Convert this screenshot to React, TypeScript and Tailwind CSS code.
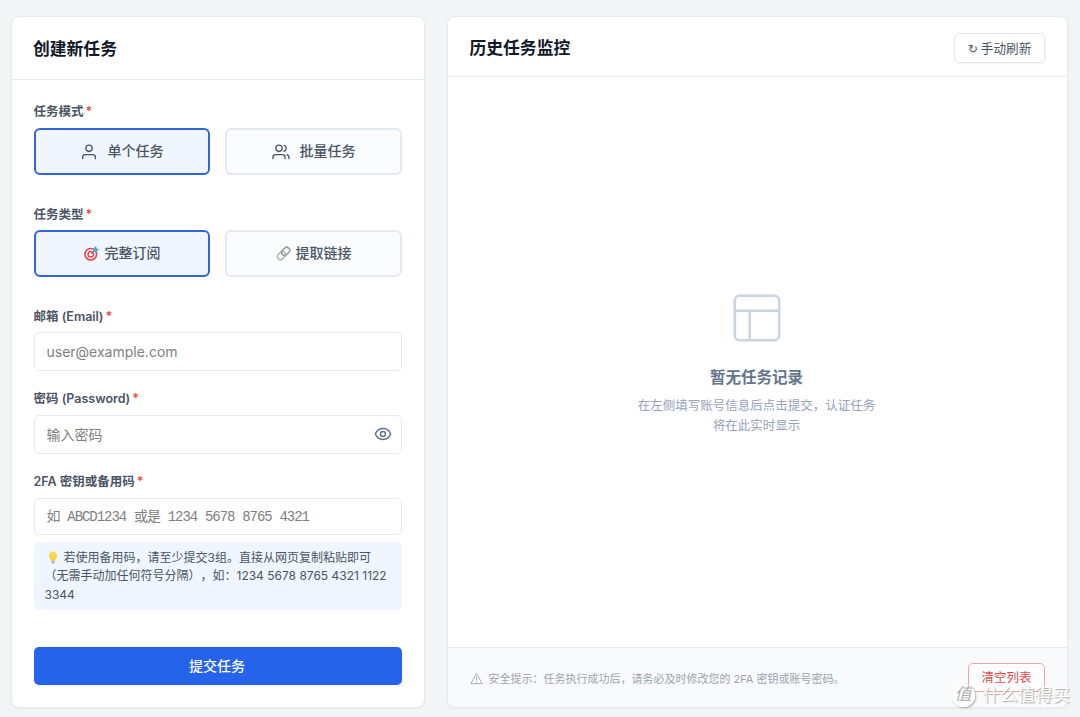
import { useState, type ReactNode } from "react";

const inputClass =
  "block w-full rounded-[5px] border border-[#e8eaed] bg-white px-[11.500px] text-[14px] text-slate-700 placeholder:text-[#808080] focus:outline-none";

function UserIcon() {
  return (
    <svg width="16" height="16" viewBox="0 0 24 24" fill="none" stroke="currentColor" strokeWidth="2" strokeLinecap="round" strokeLinejoin="round">
      <path d="M21.500 22v-2a4 4 0 0 0-4-4h-11a4 4 0 0 0-4 4v2" />
      <circle cx="12" cy="6.500" r="4.700" />
    </svg>
  );
}

function UsersIcon() {
  return (
    <svg width="18" height="16" viewBox="0 0 26 24" fill="none" stroke="currentColor" strokeWidth="2" strokeLinecap="round" strokeLinejoin="round">
      <path d="M19 22v-2a4 4 0 0 0-4-4H5a4 4 0 0 0-4 4v2" />
      <circle cx="10" cy="6.500" r="4.700" />
      <path d="M25 22v-2a4 4 0 0 0-3-3.870" />
      <path d="M17.500 2a4.700 4.700 0 0 1 0 9" />
    </svg>
  );
}

function TargetIcon() {
  return (
    <svg width="15" height="15" viewBox="0 0 30 30" fill="none">
      <circle cx="13.500" cy="16.500" r="11.500" fill="#fff" stroke="#e6474b" strokeWidth="3.400" />
      <circle cx="13.500" cy="16.500" r="5.500" stroke="#e6474b" strokeWidth="3" />
      <path d="M14 16 22 8" stroke="#39628a" strokeWidth="1.800" />
      <path d="m18 12 .5-7L24 0l1.500 5 4.500 1.500L25 12Z" fill="#4aa8e8" />
    </svg>
  );
}

function LinkIcon() {
  return (
    <svg width="15" height="15" viewBox="0 0 30 30" fill="none">
      <g transform="rotate(-45 15 15)" strokeWidth="3">
        <rect x="0" y="9" width="18" height="12" rx="6" stroke="#b0b0b0" />
        <rect x="12" y="9" width="18" height="12" rx="6" stroke="#999999" />
      </g>
    </svg>
  );
}

function BulbIcon() {
  return (
    <svg className="mr-[6px] ml-[3px] inline-block align-[-2px]" width="10" height="13" viewBox="0 0 20 26">
      <path d="M10 1a8.500 8.500 0 0 0-8.500 8.500c0 4.200 3.500 5.800 4.300 10h8.400c.8-4.200 4.300-5.800 4.300-10A8.500 8.500 0 0 0 10 1Z" fill="#fcd84d" />
      <path d="M7 10.500 8.500 19h3L13 10.500" fill="none" stroke="#f8bd35" strokeWidth="1.200" />
      <path d="M6.500 19.500h7V23a2 2 0 0 1-2 2h-3a2 2 0 0 1-2-2Z" fill="#b5bac1" />
    </svg>
  );
}

function EyeIcon() {
  return (
    <svg width="18" height="18" viewBox="0 0 24 24" fill="none" stroke="currentColor" strokeWidth="2" strokeLinecap="round" strokeLinejoin="round">
      <path d="M1.800 12C3.500 7.700 7.400 4.800 12 4.800S20.500 7.700 22.200 12C20.500 16.300 16.600 19.200 12 19.200S3.500 16.300 1.800 12Z" />
      <circle cx="12" cy="12" r="3.300" />
    </svg>
  );
}

function Label({ children }: { children: ReactNode }) {
  return (
    <div className="-ml-[0.5px] flex h-[18px] items-center pt-[2px] text-[12.500px] font-semibold text-[#4b5563]">
      <span className="whitespace-pre">{children}</span>
      <span className="ml-[2px] text-[#ef4444]">*</span>
    </div>
  );
}

interface OptionProps {
  active: boolean;
  className?: string;
  icon: ReactNode;
  onClick: () => void;
  children: ReactNode;
}

function Option({ active, className = "", icon, onClick, children }: OptionProps) {
  return (
    <button
      type="button"
      onClick={onClick}
      className={`flex h-[47px] items-center justify-center rounded-[6px] border-2 text-[14px] font-medium text-[#4b5563] ${className} ${
        active ? "border-[#2f66de] bg-[#eff6ff]" : "border-[#e5e9f0] bg-[#f9fbfd]"
      }`}
    >
      {icon}
      <span className="pb-[2px]">{children}</span>
    </button>
  );
}

export default function App() {
  const [mode, setMode] = useState("single");
  const [type, setType] = useState("full");
  const [showPassword, setShowPassword] = useState(false);

  return (
    <div className="relative flex h-[717px] w-[1080px] gap-[22px] overflow-hidden bg-[#f3f4f6] pt-4 pr-3 pb-[9px] pl-[11px] font-[Inter,'Noto_Sans_CJK_SC',sans-serif]">
      {/* Create task */}
      <section className="flex w-[414px] shrink-0 flex-col rounded-[8px] border border-[#e8eaed] bg-white shadow-xs">
        <header className="flex h-[63px] items-center border-b border-[#e5e7eb] px-[21px]">
          <h2 className="pt-[3px] text-[16.800px] font-bold text-[#111827]">创建新任务</h2>
        </header>

        <form className="flex flex-col px-[22px] pt-[22px]" onSubmit={(e) => e.preventDefault()}>
          <Label>任务模式</Label>
          <div className="mt-2 grid grid-cols-[176px_177px] gap-[15px]">
            <Option active={mode === "single"} className="gap-[11px]" icon={<UserIcon />} onClick={() => setMode("single")}>
              单个任务
            </Option>
            <Option active={mode === "batch"} className="gap-[10px]" icon={<UsersIcon />} onClick={() => setMode("batch")}>
              批量任务
            </Option>
          </div>

          <div className="mt-[30px]">
            <Label>任务类型</Label>
          </div>
          <div className="mt-[7px] grid grid-cols-[176px_177px] gap-[15px]">
            <Option active={type === "full"} className="gap-[6px]" icon={<TargetIcon />} onClick={() => setType("full")}>
              完整订阅
            </Option>
            <Option active={type === "link"} className="gap-[5px]" icon={<LinkIcon />} onClick={() => setType("link")}>
              提取链接
            </Option>
          </div>

          <div className="mt-[30px]">
            <Label>邮箱 (Email)</Label>
          </div>
          <input className={`${inputClass} mt-[7px] h-[39px]`} type="email" placeholder="user@example.com" />

          <div className="mt-[18px]">
            <Label>密码 (Password)</Label>
          </div>
          <div className="relative mt-[8px]">
            <input className={`${inputClass} h-[39px]`} type={showPassword ? "text" : "password"} placeholder="输入密码" />
            <button
              type="button"
              onClick={() => setShowPassword(!showPassword)}
              className="absolute top-[10px] right-[10px] text-slate-500"
            >
              <EyeIcon />
            </button>
          </div>

          <div className="mt-[18px]">
            <Label>2FA 密钥或备用码</Label>
          </div>
          <input
            className={`${inputClass} mt-[8px] h-[37px] font-['Liberation_Mono','Noto_Sans_CJK_SC',monospace] tracking-[-1.050px] [word-spacing:0.5px]`}
            type="text"
            placeholder="如 ABCD1234 或是 1234 5678 8765 4321"
          />

          <p className="mt-[7px] h-[68px] rounded-[5px] bg-[#eff6ff] px-[10.500px] pt-[7px] text-[12px] leading-[18.400px] whitespace-nowrap text-[#4b5563] [text-spacing-trim:space-all]">
            <BulbIcon />
            若使用备用码，请至少提交3组。直接从网页复制粘贴即可
            <br />
            （无需手动加任何符号分隔），如：1234 5678 8765 4321 1122
            <br />
            3344
          </p>

          <button type="submit" className="mt-[37px] h-[38px] rounded-[5px] bg-[#2563eb] pr-[2px] pb-[2px] text-[14px] font-medium text-white">
            提交任务
          </button>
        </form>
      </section>

      {/* History */}
      <section className="flex min-w-0 flex-1 flex-col overflow-hidden rounded-[8px] border border-[#e8eaed] bg-white shadow-xs">
        <header className="flex h-[60px] items-center justify-between border-b border-[#e5e7eb] pr-[22px] pl-[21.500px]">
          <h2 className="pt-[5px] text-[16.800px] font-bold text-[#111827]">历史任务监控</h2>
          <button
            type="button"
            className="mt-[2px] flex h-[30px] w-[91px] items-center justify-center gap-[3px] rounded-[5px] border border-[#e5e7eb] pt-[3px] text-[12.600px] text-[#4b5563] shadow-xs"
          >
            <span className="font-['DejaVu_Sans',sans-serif] text-[12px]">↻</span>
            手动刷新
          </button>
        </header>

        <div className="flex flex-1 flex-col items-center pt-[213px] pr-[2px]">
          <svg width="56" height="56" viewBox="0 0 24 24" fill="none" stroke="#cbd5e1" strokeWidth="1.100" strokeLinejoin="round">
            <rect x="2.500" y="2.500" width="19" height="19" rx="2" />
            <path d="M2.500 8.900h19M8.900 21.500V8.900" />
          </svg>
          <h3 className="mt-[20px] text-[15.500px] leading-6 font-bold text-[#64748b]">暂无任务记录</h3>
          <p className="mt-[6px] text-center text-[12.500px] leading-5 text-[#94a3b8]">
            在左侧填写账号信息后点击提交，认证任务
            <br />
            将在此实时显示
          </p>
        </div>

        <footer className="flex h-[60px] items-center justify-between border-t border-[#e5e7eb] bg-[#f9fafb] px-[22px]">
          <p className="flex items-center gap-[5.500px] pt-[3px] text-[11px] text-[#9ca3af]">
            <svg className="-mt-px" width="13" height="13" viewBox="0 0 24 24" fill="none" stroke="currentColor" strokeWidth="1.600" strokeLinejoin="round">
              <path d="M12 2.500 1.500 21.500h21Z" />
              <path d="M12 8.500v7M12 17.500v2" />
            </svg>
            安全提示：任务执行成功后，请务必及时修改您的 2FA 密钥或账号密码。
          </p>
          <button type="button" className="h-[29px] w-[77px] rounded-[5px] border border-[#f3a3a3] bg-white pt-[2px] text-[12.500px] text-[#e14b4b]">
            清空列表
          </button>
        </footer>
      </section>

      {/* Watermark */}
      <div className="pointer-events-none absolute right-[10px] bottom-[10px] flex items-center gap-[8px] text-[#fdfdfd] [text-shadow:1px_1px_1px_#aaa]">
        <span className="flex size-[23px] items-center justify-center rounded-full bg-white/90 text-[17px] text-[#b0b0b0] italic shadow-[1px_1px_2px_#aaa] [text-shadow:none]">
          值
        </span>
        <span className="text-[17.500px] leading-6">什么值得买</span>
      </div>
    </div>
  );
}
